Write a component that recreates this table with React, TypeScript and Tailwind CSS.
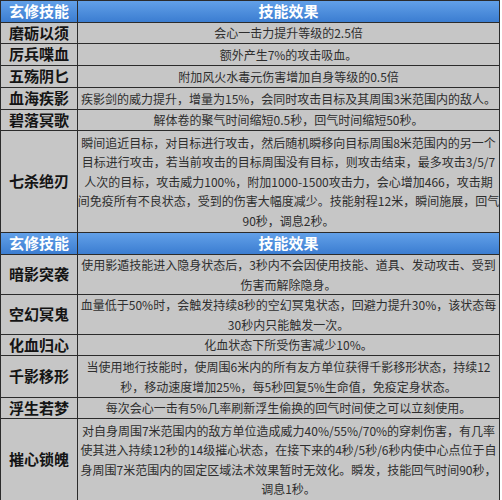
import React from 'react';

type Row = { name: string; lines: string[]; h: string };

const FONT = { fontFamily: '"Noto Sans CJK SC", "Microsoft YaHei", sans-serif' };

const PART_ONE: Row[] = [
  { name: '磨砺以须', h: 'h-[21px]', lines: ['会心一击力提升等级的2.5倍'] },
  { name: '厉兵喋血', h: 'h-[22px]', lines: ['额外产生7%的攻击吸血。'] },
  { name: '五殇阴匕', h: 'h-[22px]', lines: ['附加风火水毒元伤害增加自身等级的0.5倍'] },
  { name: '血海疾影', h: 'h-[22px]', lines: ['疾影剑的威力提升，增量为15%，会同时攻击目标及其周围3米范围内的敌人。'] },
  { name: '碧落冥歌', h: 'h-[21px]', lines: ['解体卷的聚气时间缩短0.5秒，回气时间缩短50秒。'] },
  {
    name: '七杀绝刃',
    h: 'h-[102px]',
    lines: [
      '瞬间追近目标，对目标进行攻击，然后随机瞬移向目标周围8米范围内的另一个',
      '目标进行攻击，若当前攻击的目标周围没有目标，则攻击结束，最多攻击3/5/7',
      '人次的目标，攻击威力100%，附加1000-1500攻击力，会心增加466，攻击期',
      '间免疫所有不良状态，受到的伤害大幅度减少。技能射程12米，瞬间施展，回气',
      '90秒，调息2秒。',
    ],
  },
];

const PART_TWO: Row[] = [
  {
    name: '暗影突袭',
    h: 'h-[40px]',
    lines: ['使用影遁技能进入隐身状态后，3秒内不会因使用技能、道具、发动攻击、受到', '伤害而解除隐身。'],
  },
  {
    name: '空幻冥鬼',
    h: 'h-[40px]',
    lines: ['血量低于50%时，会触发持续8秒的空幻冥鬼状态，回避力提升30%，该状态每', '30秒内只能触发一次。'],
  },
  { name: '化血归心', h: 'h-[21px]', lines: ['化血状态下所受伤害减少10%。'] },
  {
    name: '千影移形',
    h: 'h-[42px]',
    lines: ['当使用地行技能时，使周围6米内的所有友方单位获得千影移形状态，持续12', '秒，移动速度增加25%，每5秒回复5%生命值，免疫定身状态。'],
  },
  { name: '浮生若梦', h: 'h-[21px]', lines: ['每次会心一击有5%几率刷新浮生偷换的回气时间使之可以立刻使用。'] },
  {
    name: '摧心锁魄',
    h: 'h-[81px]',
    lines: [
      '对自身周围7米范围内的敌方单位造成威力40%/55%/70%的穿刺伤害，有几率',
      '使其进入持续12秒的14级摧心状态，在接下来的4秒/5秒/6秒内使中心点位于自',
      '身周围7米范围内的固定区域法术效果暂时无效化。瞬发，技能回气时间90秒，',
      '调息1秒。',
    ],
  },
];

const HeaderRow = () => (
  <div className="flex h-[22px] border-b border-[#2b2b2b] bg-linear-to-b from-[#62a0e8] to-[#3b7dd1] text-[15px] font-bold text-white">
    <div className="flex w-[77px] shrink-0 items-center justify-center border-r border-[#2b2b2b]">玄修技能</div>
    <div className="flex flex-1 items-center justify-center">技能效果</div>
  </div>
);

const SkillRow = ({ row, last }: { row: Row; last?: boolean }) => (
  <div className={`flex ${row.h} bg-[#c6c6c6] ${last ? '' : 'border-b border-[#2b2b2b]'}`}>
    <div className="flex w-[77px] shrink-0 items-center justify-center border-r border-[#2b2b2b] text-[15px] font-bold text-[#141414]">
      {row.name}
    </div>
    <div className="flex flex-1 flex-col items-center justify-center overflow-hidden text-[12px] leading-[19.5px] text-[#2e2e2e]">
      {row.lines.map((l, i) => (
        <div key={i} className="whitespace-nowrap">{l}</div>
      ))}
    </div>
  </div>
);

export default function App() {
  return (
    <div className="h-[500px] w-[502px] overflow-hidden bg-white" style={FONT}>
      <div className="w-[500px] border border-[#2b2b2b]">
        <HeaderRow />
        {PART_ONE.map(r => <SkillRow key={r.name} row={r} />)}
        <HeaderRow />
        {PART_TWO.map((r, i) => <SkillRow key={r.name} row={r} last={i === PART_TWO.length - 1} />)}
      </div>
    </div>
  );
}
